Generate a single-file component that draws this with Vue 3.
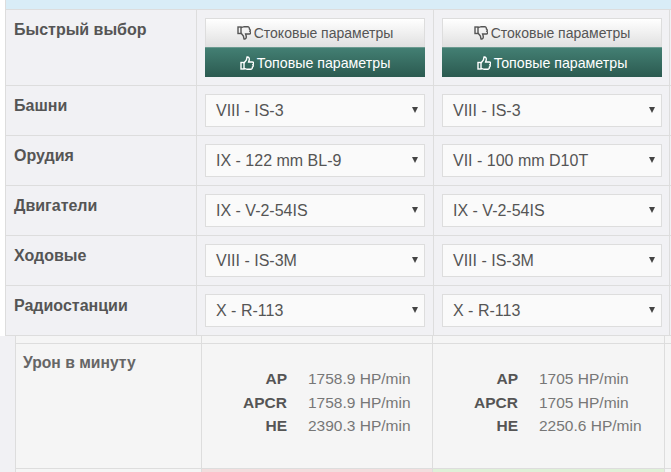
<script setup>
const rows = [
  { label: 'Башни', left: 'VIII - IS-3', right: 'VIII - IS-3' },
  { label: 'Орудия', left: 'IX - 122 mm BL-9', right: 'VII - 100 mm D10T' },
  { label: 'Двигатели', left: 'IX - V-2-54IS', right: 'IX - V-2-54IS' },
  { label: 'Ходовые', left: 'VIII - IS-3M', right: 'VIII - IS-3M' },
  { label: 'Радиостанции', left: 'X - R-113', right: 'X - R-113' }
]

const dpm = [
  [
    { name: 'AP', value: '1758.9 HP/min' },
    { name: 'APCR', value: '1758.9 HP/min' },
    { name: 'HE', value: '2390.3 HP/min' }
  ],
  [
    { name: 'AP', value: '1705 HP/min' },
    { name: 'APCR', value: '1705 HP/min' },
    { name: 'HE', value: '2250.6 HP/min' }
  ]
]
</script>

<template>
  <div class="page">
    <!-- modules -->
    <div class="modules">
      <div class="top-bar"></div>

      <div class="row quick">
        <div class="label">Быстрый выбор</div>
        <div v-for="n in 2" :key="n" class="cell">
          <button class="btn btn-stock">
            <svg class="icon" viewBox="0 0 14 14"><g transform="matrix(1 0 0 -1 0 14)"><rect x="1" y="6.5" width="3" height="6.5" /><path d="M4 7 6.4 4 7 1C8.6.6 9.6 2 9.2 4L8.6 6H12.4C13.9 6 14 8 12.9 8.6 13.5 9.6 13.1 10.6 12.4 11.1 12.5 12.2 12 13 11 13.3H7.2L4 12.4" /></g></svg>
            Стоковые параметры
          </button>
          <button class="btn btn-top">
            <svg class="icon" viewBox="0 0 14 14"><rect x="1" y="6.5" width="3" height="6.5" /><path d="M4 7 6.4 4 7 1C8.6.6 9.6 2 9.2 4L8.6 6H12.4C13.9 6 14 8 12.9 8.6 13.5 9.6 13.1 10.6 12.4 11.1 12.5 12.2 12 13 11 13.3H7.2L4 12.4" /></svg>
            Топовые параметры
          </button>
        </div>
      </div>

      <div v-for="row in rows" :key="row.label" class="row">
        <div class="label">{{ row.label }}</div>
        <div class="cell">
          <div class="select">{{ row.left }}<span class="caret"></span></div>
        </div>
        <div class="cell">
          <div class="select">{{ row.right }}<span class="caret"></span></div>
        </div>
      </div>
    </div>

    <!-- damage per minute -->
    <div class="stats">
      <div class="stats-top">
        <div></div>
        <div></div>
        <div></div>
      </div>
      <div class="stats-row">
        <div class="stats-label">Урон в минуту</div>
        <div v-for="(col, i) in dpm" :key="i" class="stats-cell">
          <div v-for="item in col" :key="item.name" class="stat">
            <b>{{ item.name }}</b>
            <span>{{ item.value }}</span>
          </div>
        </div>
      </div>
      <div class="stats-next">
        <div></div>
        <div class="bad"></div>
        <div class="good"></div>
      </div>
    </div>
  </div>
</template>

<style>
html,
body {
  margin: 0;
  background: #fff;
}
</style>

<style scoped>
.page {
  width: 671px;
  height: 472px;
  overflow: hidden;
  font-family: "Liberation Sans", Arial, sans-serif;
  color: #555;
  background: #fff;
}

/* ---- top table ---- */
.modules {
  margin-left: 5px;
  height: 336px;
  box-sizing: border-box;
  background: #f1f1f4;
  border-left: 1px solid #ddd;
}

.top-bar {
  height: 9px;
  background: #d9edf7;
  border-bottom: 1px solid #ddd;
}

.row {
  display: grid;
  grid-template-columns: 190px 237px 237px;
  height: 50px;
  box-sizing: border-box;
  border-bottom: 1px solid #ddd;
}

.row.quick {
  height: 76px;
}

.label {
  padding: 10px 8px;
  font-size: 16px;
  font-weight: bold;
  line-height: 20px;
}

.cell {
  padding: 8px 8px 0;
  border-left: 1px solid #ddd;
}

.cell:last-child {
  border-right: 1px solid #ddd;
}

.btn {
  display: flex;
  align-items: center;
  justify-content: center;
  gap: 3px;
  width: 220px;
  height: 30px;
  padding: 0;
  border: 0;
  font-family: inherit;
  font-size: 14px;
}

.btn-stock {
  height: 29px;
  color: #555;
  background: linear-gradient(#fff, #e0e0e0);
  border: 1px solid #ddd;
  border-bottom: 0;
}

.btn-top {
  color: #fff;
  font-size: 14.2px;
  background: linear-gradient(#437f73, #2b5a50);
  border-top: 1px solid #6b9a90;
}

.icon {
  width: 14px;
  height: 14px;
  fill: none;
  stroke: currentColor;
  stroke-width: 1.4;
}

.select {
  position: relative;
  width: 220px;
  height: 33px;
  box-sizing: border-box;
  padding-left: 10px;
  border: 1px solid #ddd;
  background: #fafafa;
  font-size: 16px;
  line-height: 31px;
}

.caret {
  position: absolute;
  top: 12px;
  right: 6px;
  border-top: 6px solid #444;
  border-left: 3px solid transparent;
  border-right: 3px solid transparent;
}

/* ---- bottom table ---- */
.stats {
  padding-left: 15px;
  background: linear-gradient(90deg, #f1f1f4 15px, #f5f5f5 15px);
}

.stats-top,
.stats-row,
.stats-next {
  display: grid;
  grid-template-columns: 186px 231px 232px;
  border-left: 1px solid #ddd;
}

.stats-top {
  height: 7px;
  border-bottom: 1px solid #ddd;
}

.stats-top > div,
.stats-row > div,
.stats-next > div {
  border-right: 1px solid #ddd;
}

.stats-row {
  height: 124px;
  border-bottom: 1px solid #ddd;
}

.stats-next {
  height: 3px;
}

.stats-label {
  padding: 9px 7px;
  font-size: 15.7px;
  font-weight: bold;
  line-height: 20px;
  color: #666;
}

.stats-cell {
  padding-top: 23px;
}

.stat {
  display: grid;
  grid-template-columns: 85px auto;
  column-gap: 21px;
  height: 23.5px;
  font-size: 15.5px;
  line-height: 24px;
}

.stat b {
  text-align: right;
}

.stat span {
  color: #777;
}

.bad {
  background: #f2dede;
}

.good {
  background: #dff0d8;
}
</style>
